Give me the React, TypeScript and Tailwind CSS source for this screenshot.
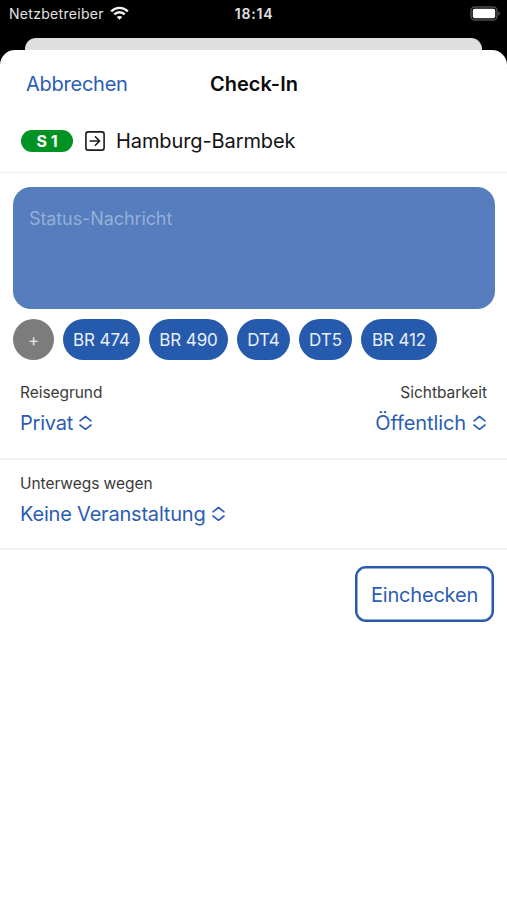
import type { ReactNode } from "react";

const Wifi = () => (
  <svg className="relative -top-px" width="19" height="14" viewBox="0 0 19 14" fill="none" stroke="#f4f4f4" strokeWidth="2.4">
    <path d="M1.2 5.3C5.8 0.7 13.2 0.7 17.8 5.3" />
    <path d="M4.3 8.4C7.2 5.5 11.8 5.5 14.7 8.4" />
    <path d="M9.5 13.8L6.7 11C8.3 9.5 10.7 9.5 12.3 11Z" fill="#f4f4f4" stroke="none" />
  </svg>
);

const Battery = () => (
  <svg className="relative -top-px" width="31" height="15" viewBox="0 0 31 15" fill="none">
    <rect x="1" y="1" width="26" height="13" rx="3.8" stroke="#4d4d4d" strokeWidth="1.5" />
    <rect x="2.8" y="2.8" width="22.4" height="9.4" rx="1.8" fill="#fff" />
    <path d="M28.4 5.4C30.4 6.1 30.4 8.9 28.4 9.6Z" fill="#5a5a5a" />
  </svg>
);

// Arrow inside a rounded square, marks the destination
const ArrowSquare = () => (
  <svg width="20" height="20" viewBox="0 0 20 20" fill="none" stroke="#1b1b1b" strokeWidth="1.6" strokeLinecap="round" strokeLinejoin="round">
    <rect x="0.9" y="0.9" width="18.2" height="18.2" rx="2.4" />
    <path d="M5.2 10H14.4M10.4 5.8L14.6 10L10.4 14.2" />
  </svg>
);

const UpDown = () => (
  <svg width="13" height="16" viewBox="0 0 13 16" fill="none" stroke="#2b5db2" strokeWidth="1.6" strokeLinecap="round" strokeLinejoin="round">
    <path d="M1 5.8L6.5 1.5L12 5.8" />
    <path d="M1 10L6.5 14.3L12 10" />
  </svg>
);

const Chip = ({ children, width }: { children: ReactNode; width: string }) => (
  <button className={`h-[41px] shrink-0 rounded-full bg-[#265aad] pt-px text-[17px] leading-none tracking-[-0.1px] text-[#e9effa] ${width}`}>
    {children}
  </button>
);

const Field = ({ label, value, right = false }: { label: string; value: string; right?: boolean }) => (
  <div className={`flex flex-col ${right ? "items-end" : "items-start"}`}>
    <span className="h-6 text-[15.5px] leading-6 tracking-[-0.05px] text-[#3a3a3a]">{label}</span>
    <button className={`mt-[2px] flex h-8 items-center text-[20px] leading-8 text-[#2b5db2] ${right ? "gap-[7px] pr-px tracking-[-0.1px]" : "gap-[6px] tracking-[-0.2px]"}`}>
      {value}
      <UpDown />
    </button>
  </div>
);

export default function App() {
  return (
    <div className="flex h-[900px] w-[507px] flex-col overflow-hidden bg-black font-['Inter',sans-serif]">
      {/* Status bar */}
      <div className="grid h-[38px] shrink-0 grid-cols-3 items-start pl-[9px] pr-[8px] text-[14px] leading-7 text-[#e2e2e2]">
        <div className="flex h-7 items-center gap-[6px]">
          <span className="tracking-[0.3px]">Netzbetreiber</span>
          <Wifi />
        </div>
        <div className="text-center font-semibold tracking-[0.8px]">18:14</div>
        <div className="-mr-[2px] flex h-7 items-center justify-end">
          <Battery />
        </div>
      </div>

      {/* Edge of the view behind the sheet */}
      <div className="mx-[25px] h-3 shrink-0 rounded-t-[11px] bg-[#dfdfdf]" />

      <main className="flex flex-1 flex-col rounded-t-[15px] bg-white">
        <header className="grid h-[68px] shrink-0 grid-cols-3 items-center px-[26px] text-[20px]">
          <button className="text-left tracking-[-0.25px] text-[#2b5db2]">Abbrechen</button>
          <h1 className="pl-px text-center font-semibold text-[#0b0b0b]">Check-In</h1>
        </header>

        <div className="mt-px flex h-[55px] shrink-0 items-start border-b-3 border-[#f7f7f7] pl-[21px]">
          <div className="flex h-11 items-center">
            <span className="flex h-[22px] w-[52px] items-center justify-center rounded-full bg-[#009222] text-[16px] font-bold text-white">S 1</span>
            <span className="ml-[12px]">
              <ArrowSquare />
            </span>
            <span className="ml-[11px] text-[20px] tracking-[-0.1px] text-[#121212]">Hamburg-Barmbek</span>
          </div>
        </div>

        <textarea
          placeholder="Status-Nachricht"
          className="ml-[13px] mr-[12px] mt-[13px] h-[122px] shrink-0 resize-none rounded-[18px] bg-[#567dbd] px-4 py-[18px] text-[18px] leading-7 tracking-[-0.1px] text-white outline-none placeholder:text-[#94afd8]"
        />

        <div className="mt-[10px] flex gap-[9px] pl-[13px]">
          <button className="h-[41px] w-[41px] shrink-0 rounded-full bg-[#7c7c7c] pt-px text-[17px] leading-none text-[#e6e6e6]">+</button>
          <Chip width="w-[77px]">BR 474</Chip>
          <Chip width="w-[79px]">BR 490</Chip>
          <Chip width="w-[53px]">DT4</Chip>
          <Chip width="w-[53px]">DT5</Chip>
          <Chip width="w-[76px]">BR 412</Chip>
        </div>

        <div className="mt-[21px] flex h-[79px] shrink-0 justify-between border-b-2 border-[#f0f0f0] px-[20px]">
          <Field label="Reisegrund" value="Privat" />
          <Field label="Sichtbarkeit" value="Öffentlich" right />
        </div>

        <div className="mt-[12px] flex h-[78px] shrink-0 border-b-2 border-[#f0f0f0] px-[20px]">
          <Field label="Unterwegs wegen" value="Keine Veranstaltung" />
        </div>

        <div className="flex justify-end pr-[13px] pt-[16px]">
          <button className="h-[56px] w-[139px] rounded-[11px] border-2 border-[#265aad] pt-px text-[20px] tracking-[-0.2px] text-[#2b5db2] shadow-[inset_0_0_0_0.5px_#265aad]">Einchecken</button>
        </div>
      </main>
    </div>
  );
}
